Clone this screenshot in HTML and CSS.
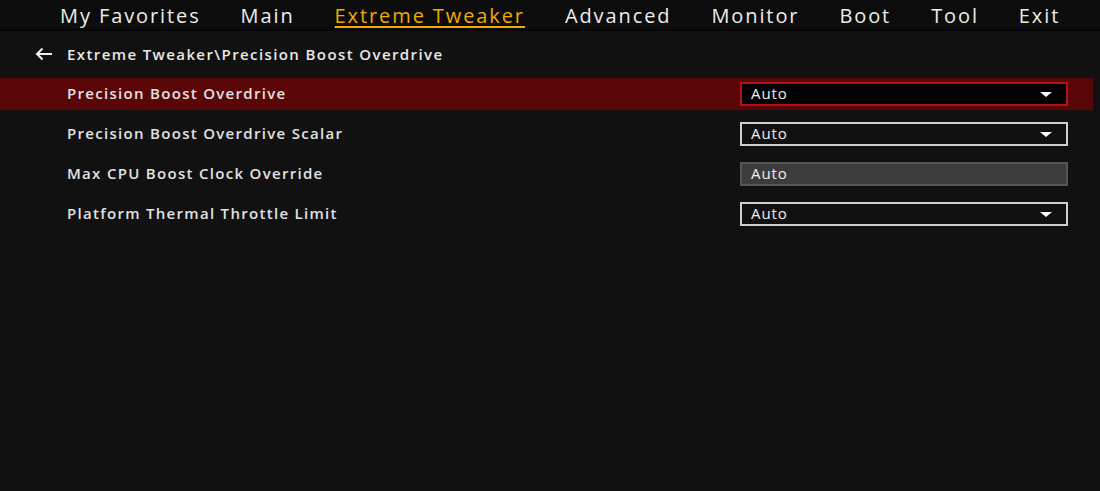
FILE: index.html
```html
<!DOCTYPE html>
<html lang="en">
<head>
  <meta charset="UTF-8">
  <title>Extreme Tweaker - Precision Boost Overdrive</title>
  <link rel="stylesheet" href="styles.css">
</head>
<body>
  <nav class="top-nav">
    <a class="nav-item">My Favorites</a>
    <a class="nav-item">Main</a>
    <a class="nav-item active">Extreme Tweaker</a>
    <a class="nav-item">Advanced</a>
    <a class="nav-item">Monitor</a>
    <a class="nav-item">Boot</a>
    <a class="nav-item">Tool</a>
    <a class="nav-item">Exit</a>
  </nav>

  <div class="breadcrumb">
    <svg class="back-arrow" width="18" height="14" viewBox="0 0 18 14">
      <path d="M17 7H2M7.5 1.5L2 7l5.5 5.5" fill="none" stroke="#f2f2f2" stroke-width="2"/>
    </svg>
    <span>Extreme Tweaker\Precision Boost Overdrive</span>
  </div>

  <div class="settings">
    <div class="setting-row selected">
      <span class="setting-label">Precision Boost Overdrive</span>
      <div class="select-box">Auto<span class="caret"></span></div>
    </div>
    <div class="setting-row">
      <span class="setting-label">Precision Boost Overdrive Scalar</span>
      <div class="select-box">Auto<span class="caret"></span></div>
    </div>
    <div class="setting-row">
      <span class="setting-label">Max CPU Boost Clock Override</span>
      <div class="select-box disabled">Auto</div>
    </div>
    <div class="setting-row">
      <span class="setting-label">Platform Thermal Throttle Limit</span>
      <div class="select-box">Auto<span class="caret"></span></div>
    </div>
  </div>
</body>
</html>
```

FILE: styles.css
```css
body {
  font-family: 'Open Sans', 'Noto Sans', sans-serif;
  background-color: #111111;
  color: #e6e6e6;
  margin: 0;
  height: 100vh;
  overflow: hidden;
}
.top-nav {
  display: flex;
  gap: 40px;
  height: 31px;
  padding-left: 60px;
  background: #0c0c0c;
  border-bottom: 2px solid #050505;
  box-sizing: border-box;
}
.nav-item {
  font-size: 20px;
  font-weight: 500;
  line-height: 31px;
  color: #ececec;
  letter-spacing: 1.9px;
  text-decoration: none;
}
.nav-item.active {
  color: #f2a900;
  text-decoration: underline;
  text-decoration-thickness: 2px;
  text-underline-offset: 3px;
}
.breadcrumb {
  display: flex;
  align-items: center;
  height: 47px;
  padding-bottom: 2px;
  box-sizing: border-box;
  padding-left: 35px;
  font-size: 15px;
  font-weight: 600;
  letter-spacing: 1.4px;
  color: #e8e8e8;
}
.back-arrow {
  margin-right: 14px;
}
.settings {
  display: flex;
  flex-direction: column;
  gap: 8px;
}
.setting-row {
  display: flex;
  align-items: center;
  justify-content: space-between;
  height: 32px;
  width: 1093px;
  padding: 0 25px 0 67px;
  box-sizing: border-box;
}
.setting-row.selected {
  background: #5a0606;
}
.setting-label {
  padding-bottom: 3px;
  font-size: 15px;
  font-weight: 600;
  letter-spacing: 1.3px;
  color: #e2e2e2;
}
.select-box {
  position: relative;
  width: 328px;
  height: 24px;
  box-sizing: border-box;
  border: 2px solid #cfcfcf;
  background: #111111;
  padding-left: 9px;
  font-size: 15px;
  font-weight: 500;
  letter-spacing: 0.9px;
  line-height: 19px;
  color: #f0f0f0;
}
.selected .select-box {
  background: #000000;
  border-color: #b0121a;
}
.select-box.disabled {
  background: #3c3c3c;
  border-color: #555555;
}
.caret {
  position: absolute;
  right: 14px;
  top: 8px;
  border-left: 6px solid transparent;
  border-right: 6px solid transparent;
  border-top: 5px solid #ffffff;
}
```
